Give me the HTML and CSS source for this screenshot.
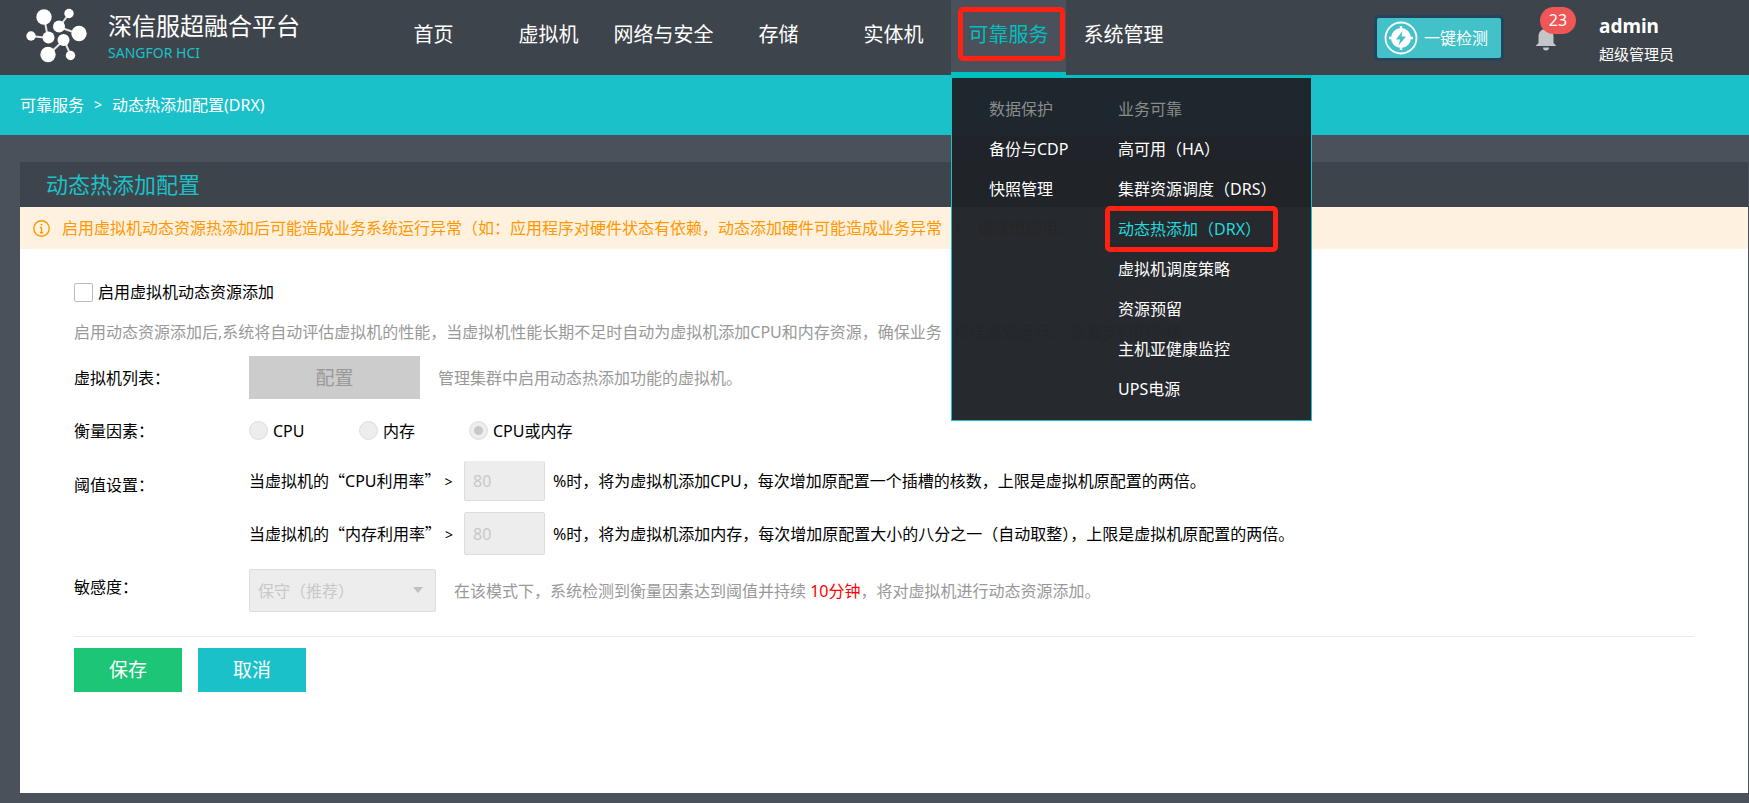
FILE: index.html
```html
<!DOCTYPE html>
<html lang="zh-CN">
<head>
<meta charset="utf-8">
<title>动态热添加配置(DRX)</title>
<link rel="stylesheet" href="styles.css">
</head>
<body>
<header class="topbar">
  <a class="brand" href="#">
    <svg class="brand-logo" viewBox="0 0 62 58" aria-hidden="true">
      <g stroke="#e4e5e6" stroke-width="2">
        <path d="M18 10L22 31M5 29L22 31M43 7L33 20M33 20L53 27M38 33L22 48M38 33L45 49"/>
      </g>
      <g fill="#fff">
        <circle cx="18" cy="10" r="7.700"/><circle cx="43" cy="6.500" r="4.700"/><circle cx="33" cy="19.500" r="6"/>
        <circle cx="53" cy="26.500" r="7.700"/><circle cx="5" cy="29" r="4.700"/><circle cx="22.500" cy="30.500" r="6"/>
        <circle cx="37.500" cy="33" r="6"/><circle cx="22" cy="47.500" r="7.700"/><circle cx="44.500" cy="48.500" r="4.700"/>
      </g>
    </svg>
    <span class="brand-text">
      <span class="brand-name">深信服超融合平台</span>
      <span class="brand-sub">SANGFOR HCI</span>
    </span>
  </a>
  <nav class="nav">
    <a class="nav-item" href="#">首页</a>
    <a class="nav-item" href="#">虚拟机</a>
    <a class="nav-item" href="#">网络与安全</a>
    <a class="nav-item" href="#">存储</a>
    <a class="nav-item" href="#">实体机</a>
    <div class="nav-group">
      <a class="nav-item nav-item-active" href="#">可靠服务</a>
      <div class="menu">
        <div class="menu-col">
          <span class="menu-title">数据保护</span>
          <a class="menu-link" href="#">备份与CDP</a>
          <a class="menu-link" href="#">快照管理</a>
        </div>
        <div class="menu-col">
          <span class="menu-title">业务可靠</span>
          <a class="menu-link" href="#">高可用（HA）</a>
          <a class="menu-link" href="#">集群资源调度（DRS）</a>
          <a class="menu-link menu-link-active" href="#">动态热添加（DRX）</a>
          <a class="menu-link" href="#">虚拟机调度策略</a>
          <a class="menu-link" href="#">资源预留</a>
          <a class="menu-link" href="#">主机亚健康监控</a>
          <a class="menu-link" href="#">UPS电源</a>
        </div>
      </div>
    </div>
    <a class="nav-item" href="#">系统管理</a>
  </nav>
  <div class="tools">
    <button class="check-btn" type="button">
      <svg class="check-icon" viewBox="0 0 34 34" aria-hidden="true">
        <circle cx="17" cy="17" r="15.500" fill="none" stroke="#fff" stroke-width="1.800"/>
        <circle cx="17" cy="17" r="10" fill="#fff"/>
        <path d="M17 5v24M5 17h24" stroke="#fff" stroke-width="2.400"/>
        <path d="M18.500 10L12 18.500h4.200L14.500 24.500L22 15.500h-4.500z" fill="#43c1c8"/>
      </svg>
      <span>一键检测</span>
    </button>
    <button class="bell" type="button" aria-label="告警">
      <svg class="bell-icon" viewBox="0 0 20 22" aria-hidden="true">
        <path fill="#c4c6c9" d="M10 0c-5 0-7.500 3.500-7.500 7.500V14L0 16.500V17h20v-.5L17.500 14V7.500C17.500 3.500 15 0 10 0zM7 18.500a3 3 0 0 0 6 0z"/>
      </svg>
      <span class="badge">23</span>
    </button>
    <div class="user">
      <strong class="user-name">admin</strong>
      <span class="user-role">超级管理员</span>
    </div>
  </div>
</header>

<nav class="crumbs">
  <a class="crumb" href="#">可靠服务</a>
  <span class="crumb-sep">&gt;</span>
  <span>动态热添加配置(DRX)</span>
</nav>

<main class="page">
  <section class="panel">
    <h1 class="panel-title">动态热添加配置</h1>
    <p class="notice">
      <svg class="notice-icon" viewBox="0 0 16 16" aria-hidden="true">
        <circle cx="8" cy="8" r="7.300" fill="none" stroke="#ff9800" stroke-width="1.300"/>
        <path d="M8 7v5M6.500 7H8M6.500 12h3M7.200 4.500h1.600" fill="none" stroke="#ff9800" stroke-width="1.300"/>
      </svg>
      <span>启用虚拟机动态资源热添加后可能造成业务系统运行异常（如：应用程序对硬件状态有依赖，动态添加硬件可能造成业务异常</span>
      <span>），请谨慎使用。</span>
    </p>
    <form class="form">
      <label class="option enable">
        <input class="checkbox" type="checkbox">启用虚拟机动态资源添加
      </label>
      <p class="desc">
        <span>启用动态资源添加后,系统将自动评估虚拟机的性能，当虚拟机性能长期不足时自动为虚拟机添加CPU和内存资源，确保业务</span>
        <span>持续高效运行。 查看支持的系统</span>
      </p>

      <div class="row row-list">
        <span class="row-label" id="list-label">虚拟机列表：</span>
        <button class="btn btn-disabled" type="button" disabled>配置</button>
        <span class="hint">管理集群中启用动态热添加功能的虚拟机。</span>
      </div>

      <div class="row row-factor" role="radiogroup" aria-labelledby="factor-label">
        <span class="row-label" id="factor-label">衡量因素：</span>
        <label class="option factor"><input class="radio" type="radio" name="factor" disabled>CPU</label>
        <label class="option factor"><input class="radio" type="radio" name="factor" disabled>内存</label>
        <label class="option factor"><input class="radio" type="radio" name="factor" checked disabled>CPU或内存</label>
      </div>

      <div class="row row-cpu">
        <span class="row-label">阈值设置：</span>
        <label class="threshold" for="cpu">当虚拟机的<span class="quote">“</span>CPU利用率<span class="quote">”</span><span class="gt">&gt;</span></label>
        <input class="number number-cut" id="cpu" type="text" value="80" disabled>
        <span>%时，将为虚拟机添加CPU，每次增加原配置一个插槽的核数，上限是虚拟机原配置的两倍。</span>
      </div>

      <div class="row row-mem">
        <span class="row-label"></span>
        <label class="threshold" for="mem">当虚拟机的<span class="quote">“</span>内存利用率<span class="quote">”</span><span class="gt">&gt;</span></label>
        <input class="number" id="mem" type="text" value="80" disabled>
        <span>%时，将为虚拟机添加内存，每次增加原配置大小的八分之一（自动取整），上限是虚拟机原配置的两倍。</span>
      </div>

      <div class="row row-sense">
        <label class="row-label" for="sense">敏感度：</label>
        <span class="select-wrap">
          <select class="select" id="sense" disabled><option>保守（推荐）</option></select>
        </span>
        <span class="hint">在该模式下，系统检测到衡量因素达到阈值并持续 <em class="warn">10分钟</em>，将对虚拟机进行动态资源添加。</span>
      </div>

      <div class="actions">
        <button class="btn btn-save" type="submit">保存</button>
        <button class="btn btn-cancel" type="button">取消</button>
      </div>
    </form>
  </section>
</main>
</body>
</html>
```
FILE: styles.css
```css
* { box-sizing: border-box; }

body {
  margin: 0;
  min-height: 100vh;
  display: flex;
  flex-direction: column;
  background: #4a515b;
  color: #000;
  font: 16px/24px "Noto Sans", "Noto Sans CJK SC", sans-serif;
  white-space: nowrap;
}

a { color: inherit; text-decoration: none; }
p, h1 { margin: 0; font-weight: normal; }
button, input, select { font: inherit; margin: 0; }

/* Top bar */
.topbar {
  display: flex;
  height: 75px;
  background: #3e444b;
  color: #fff;
}
.brand {
  display: flex;
  align-items: center;
  gap: 20px;
  width: 376px;
  flex: none;
  padding: 0 0 4px 26px;
}
.brand-logo { width: 62px; height: 58px; }
.brand-text { display: flex; flex-direction: column; }
.brand-name { font-size: 24px; line-height: 34px; }
.brand-sub { font-size: 14px; line-height: 20px; color: #1ac1c9; }

.nav { display: flex; }
.nav-item {
  display: block;
  width: 115px;
  height: 75px;
  line-height: 70px;
  font-size: 20px;
  text-align: center;
}
.nav-group { position: relative; }
.nav-item-active {
  position: relative;
  z-index: 2;
  height: 78px;
  border-bottom: 6px solid #00bfc1;
  background: #4a515b;
  color: #00bfc1;
}
.nav-item-active::after,
.menu-link-active::after {
  content: "";
  position: absolute;
  border: 5px solid #ff2113;
  border-radius: 5px;
}
.nav-item-active::after { inset: 7px 1px 11px 7px; }

.menu {
  position: absolute;
  z-index: 1;
  top: 75px;
  left: 0;
  display: flex;
  width: 361px;
  padding: 11px 0 11px 37px;
  border: 1px solid #1ac1c9;
  border-top: 3px solid #00bfc1;
  background: rgba(31, 34, 39, .97);
  background-clip: padding-box;
  line-height: 40px;
}
.menu-col { display: flex; flex-direction: column; align-items: flex-start; }
.menu-col:first-child { width: 129px; }
.menu-title { color: #8c8c8c; }
.menu-link { position: relative; }
.menu-link-active { color: #23d9df; }
.menu-link-active::after { inset: -3px -17px -3px -13px; }

.tools { display: flex; margin-left: auto; }
.check-btn {
  display: flex;
  align-items: center;
  gap: 6px;
  width: 130px;
  height: 46px;
  margin: 15px 32px 0 0;
  padding: 0 0 0 7px;
  border: 3px solid #24445c;
  border-radius: 5px;
  background: #43c1c8;
  color: #fff;
}
.check-icon { width: 34px; height: 34px; }
.bell {
  position: relative;
  width: 20px;
  height: 22px;
  margin: 29px 43px 0 0;
  padding: 0;
  border: 0;
  background: none;
}
.bell-icon { display: block; width: 20px; height: 22px; }
.badge {
  position: absolute;
  left: 4px;
  bottom: 17px;
  width: 36px;
  border-radius: 14px;
  background: #ef5656;
  color: #fff;
  line-height: 27px;
  text-align: center;
}
.user { display: flex; flex-direction: column; width: 150px; padding-top: 12px; }
.user-name { font-size: 19px; line-height: 28px; }
.user-role { font-size: 15px; line-height: 28px; }

/* Breadcrumb */
.crumbs {
  display: flex;
  gap: 10px;
  padding: 18px 20px;
  background: #1ac1c9;
  color: #fff;
}
.crumb-sep { font-size: 14px; }

/* Panel */
.page {
  flex: 1;
  display: flex;
  padding: 27px 1px 10px 20px;
}
.panel { flex: 1; background: #fff; }
.panel-title {
  padding: 0 26px;
  background: #3e444b;
  color: #1ac1c9;
  font-size: 22px;
  line-height: 45px;
}
.notice {
  display: flex;
  align-items: center;
  gap: 12px;
  height: 42px;
  padding: 0 13px;
  background: #fff1e0;
  color: #ff9800;
}
.notice-icon { width: 17px; height: 17px; flex: none; }

/* Form */
.form { padding: 23px 54px; }
.desc, .hint { color: #999; }
.desc { display: flex; gap: 12px; line-height: 40px; }
.option { display: flex; align-items: center; gap: 5px; }
.enable { width: max-content; height: 40px; }
.checkbox, .radio {
  appearance: none;
  width: 19px;
  height: 19px;
  border: 1px solid #bbb;
  border-radius: 2px;
  background: #fff;
}
.radio { border-color: #ddd; border-radius: 50%; background: #ededed; }
.radio:checked { background: radial-gradient(circle, #c8c8c8 4px, #ededed 5px); }

.row { display: flex; align-items: center; height: 43px; }
.row-label { width: 175px; flex: none; }
.row-list { margin-top: 4px; }
.row-factor { margin-top: 10px; }
.row-cpu { height: 40px; margin-top: 9px; }
.row-cpu .row-label { align-self: flex-start; line-height: 48px; }
.row-mem { margin-top: 11px; }
.row-sense { margin-top: 14px; }
.row-sense .row-label { align-self: flex-start; line-height: 36px; }
.factor { width: 110px; }
.threshold { width: 215px; }
.quote { font-family: "Noto Sans CJK SC", sans-serif; }
.gt { margin-left: 4px; font-size: 14px; }
.number {
  width: 81px;
  height: 43px;
  margin-right: 8px;
  padding: 0 8px;
}
.number, .select {
  border: 1px solid #ddd;
  border-radius: 2px;
  background: #ededed;
  color: #c8c8c8;
  opacity: 1;
}
.number-cut { height: 40px; border-top: 0; }
.hint { margin-left: 18px; }
.warn { color: #f00; font-style: normal; }

.select-wrap { position: relative; }
.select {
  display: block;
  appearance: none;
  width: 187px;
  height: 43px;
  padding: 0 8px;
}
.select-wrap::after {
  content: "";
  position: absolute;
  top: 18px;
  right: 13px;
  border: 5px solid transparent;
  border-top: 6px solid #c0c0c0;
  border-bottom: 0;
}

.btn {
  width: 108px;
  height: 44px;
  padding: 0;
  border: 0;
  color: #fff;
  font-size: 19px;
}
.btn-disabled { width: 171px; height: 43px; background: #ccc; color: #999; }
.btn-save { background: #1cc676; }
.btn-cancel { background: #1ac1c9; }
.actions {
  display: flex;
  gap: 16px;
  margin-top: 24px;
  padding-top: 11px;
  border-top: 1px solid #eaeaea;
}
```
